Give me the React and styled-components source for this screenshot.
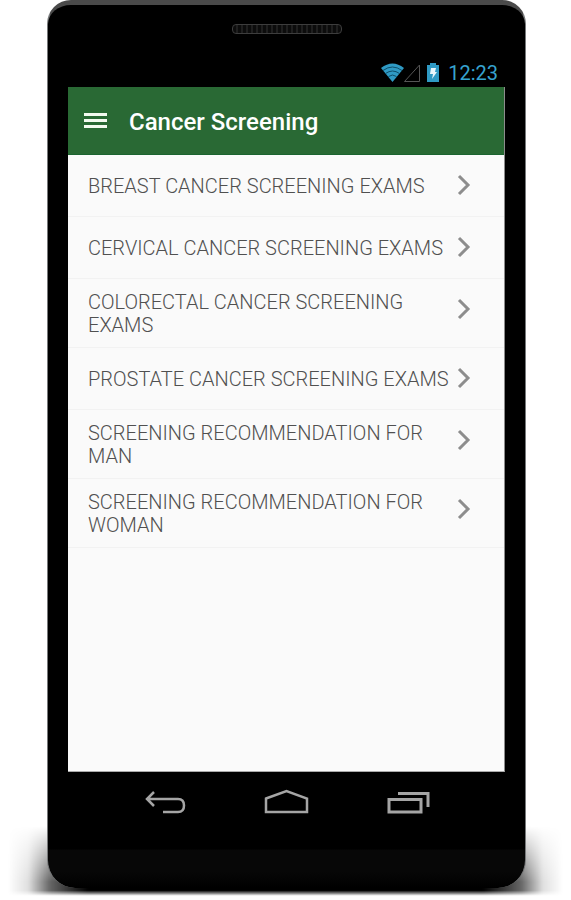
import styled, { createGlobalStyle } from "styled-components";

const GlobalStyle = createGlobalStyle`
  * {
    box-sizing: border-box;
  }
  body {
    margin: 0;
    background: #fff;
    font-family: Roboto, "Liberation Sans", sans-serif;
  }
`;
const Stage = styled.div`
  position: relative;
  display: flex;
  min-height: 100vh;
  padding: 0 45px 12px 47px;
  overflow: hidden;
`;
const Shadow = styled.div`
  position: absolute;
  left: 8px;
  right: 8px;
  bottom: 4px;
  height: 70px;
  background: linear-gradient(
    to right,
    transparent,
    rgba(0, 0, 0, 0.12) 20px,
    rgba(0, 0, 0, 0.6) 42px,
    #000 80px,
    #000 calc(100% - 80px),
    rgba(0, 0, 0, 0.6) calc(100% - 42px),
    rgba(0, 0, 0, 0.12) calc(100% - 20px),
    transparent
  );
  mask-image: linear-gradient(transparent, #000 80%, #000 92%, transparent);
  filter: blur(1px);
`;
const Phone = styled.div`
  position: relative;
  display: flex;
  flex-direction: column;
  flex: 1;
  padding: 0 20px;
  border: 1px solid #77797a;
  border-top: 5px solid #4a4a4a;
  border-bottom: 0;
  border-radius: 24px 24px 28px 28px;
  background: linear-gradient(to top, #000 0, #070707 16px, #070707 38px, #000 39px);
`;
const Speaker = styled.div`
  align-self: center;
  width: 110px;
  height: 10px;
  margin-top: 19px;
  border: 1px solid #3d3d3d;
  border-radius: 4px;
  background: repeating-linear-gradient(90deg, #0c0c0c 0 3px, #1f1f1f 3px 5px);
`;
const StatusBar = styled.div`
  display: flex;
  align-items: center;
  justify-content: flex-end;
  height: 29px;
  margin-top: 24px;
  padding-right: 7px;
  color: #36a3d0;
  font-size: 20px;
  line-height: 24px;

  svg {
    display: block;
  }
`;
const Clock = styled.time`
  margin-left: 8px;
`;
const Screen = styled.main`
  display: flex;
  flex-direction: column;
  flex: 1;
  border-right: 1px solid #8c8c8c;
  border-bottom: 1px solid #aaa;
  background: #fafafa;
`;
const Header = styled.header`
  display: flex;
  align-items: center;
  gap: 19px;
  height: 68px;
  padding: 2px 12px 0;
  border-bottom: 1px solid #1b6430;
  background: #296934;
  color: #fff;
`;
const MenuButton = styled.button`
  display: flex;
  padding: 3px;
  border: 0;
  background: none;
  color: inherit;
`;
const Title = styled.h1`
  margin: 0;
  font-size: 24px;
  font-weight: 500;
  line-height: 28px;
`;
const List = styled.ul`
  margin: 0;
  padding: 0;
  list-style: none;
`;
const Item = styled.li`
  border-bottom: 1px solid #f2f2f2;
`;
const ItemLink = styled.a`
  display: flex;
  align-items: flex-start;
  justify-content: space-between;
  min-height: 61px;
  padding: 12px 28px 10px 20px;
  color: #505050;
  font-size: 20px;
  font-weight: 300;
  line-height: 23px;
  text-decoration: none;
  text-transform: uppercase;

  svg {
    flex: none;
    margin-top: 6px;
  }
`;
const Label = styled.span`
  flex: 1;
  align-self: center;
`;
const NavBar = styled.nav`
  display: flex;
  justify-content: space-between;
  height: 116px;
  padding: 15px 72px 0;
`;
const NavButton = styled.button`
  display: flex;
  width: 50px;
  height: 32px;
  padding: 0;
  border: 0;
  background: none;
`;

const exams = [
  "Breast cancer screening exams",
  "Cervical cancer screening exams",
  "Colorectal cancer screening exams",
  "Prostate cancer screening exams",
  "Screening recommendation for man",
  "Screening recommendation for woman",
];

const Chevron = () => (
  <svg width="24" height="24" viewBox="0 0 24 24" fill="none" aria-hidden="true">
    <path d="M7 3l9 9-9 9" stroke="#8d8d8d" strokeWidth="3" />
  </svg>
);

const StatusIcons = () => (
  <svg width="60" height="20" viewBox="0 0 60 20" fill="none" aria-hidden="true">
    <path d="M1 5Q12.500-4 24 5L12.500 19Z" fill="#2f9ac4" />
    <path
      d="M3 7.500Q12.500 .5 22 7.500M5.500 10.500Q12.500 5.500 19.500 10.500M8.500 13.500Q12.500 10.500 16.500 13.500"
      stroke="#0d4d68"
      strokeWidth="1"
    />
    <path d="M24.500 18.500H39.500V2Z" stroke="#555" />
    <path d="M47 2h3V0h6v2h3v17H47z" fill="#2f9ac4" />
    <path d="M51 5h5l-1 4h2l-5 7 1-5h-3z" fill="#e9f7fc" />
  </svg>
);

function App() {
  return (
    <>
      <GlobalStyle />
      <Stage>
        <Shadow />
        <Phone>
          <Speaker />
          <StatusBar>
            <StatusIcons />
            <Clock>12:23</Clock>
          </StatusBar>
          <Screen>
            <Header>
              <MenuButton aria-label="Menu">
                <svg width="24" height="18" viewBox="0 0 24 18" aria-hidden="true">
                  <path d="M1 0h23v3H1zM1 6h23v3H1zM1 12h23v3H1z" fill="#f3faf0" />
                </svg>
              </MenuButton>
              <Title>Cancer Screening</Title>
            </Header>
            <List>
              {exams.map((exam) => (
                <Item key={exam}>
                  <ItemLink href="#">
                    <Label>{exam}</Label>
                    <Chevron />
                  </ItemLink>
                </Item>
              ))}
            </List>
          </Screen>
          {/* Android system buttons */}
          <NavBar>
            <NavButton aria-label="Back">
              <svg width="50" height="32" viewBox="0 0 50 32" fill="none" stroke="#a5a5a5">
                <path d="M14 5L7 12l7 7M7 12h31q6 0 6 6.500t-6 6.500H23" strokeWidth="2.500" />
              </svg>
            </NavButton>
            <NavButton aria-label="Home">
              <svg width="50" height="32" viewBox="0 0 50 32" fill="none" stroke="#a5a5a5">
                <path d="M4 11.500L24.500 4 45 11.500V25H4z" strokeWidth="2.500" />
              </svg>
            </NavButton>
            <NavButton aria-label="Recent apps">
              <svg width="50" height="32" viewBox="0 0 50 32" fill="none" stroke="#a5a5a5">
                <path d="M6 12.500h32v12.500H6zM15 6.500h30V20" strokeWidth="3" />
              </svg>
            </NavButton>
          </NavBar>
        </Phone>
      </Stage>
    </>
  );
}

export default App;
